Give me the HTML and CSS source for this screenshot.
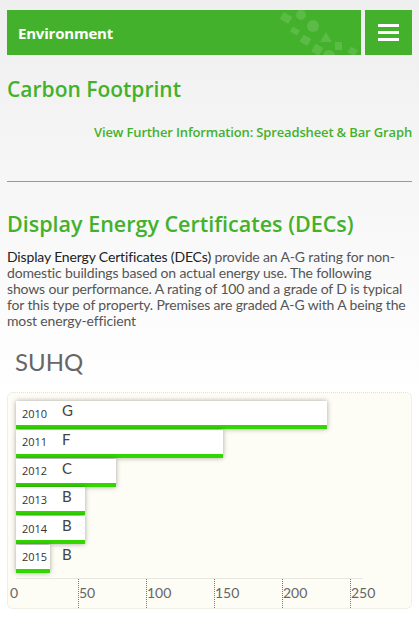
FILE: index.html
```html
<!DOCTYPE html>
<html lang="en">
<head>
    <meta charset="UTF-8">
    <meta name="viewport" content="width=device-width, initial-scale=1.0">
    <title>Environment - Carbon Footprint</title>
    <link rel="stylesheet" href="styles.css">
</head>
<body>
    <!-- Top bar with section title and menu button -->
    <div class="topbar">
        <div class="section-title">
            <span>Environment</span>
            <svg class="pattern" width="90" height="45" viewBox="0 0 90 45">
                <g fill="#ffffff" fill-opacity="0.13">
                    <rect x="10" y="4" width="10" height="8" rx="1" transform="rotate(30 15 8)"/>
                    <circle cx="30" cy="5" r="5"/>
                    <circle cx="42" cy="16" r="6"/>
                    <rect x="20" y="18" width="8" height="6" transform="rotate(30 24 21)"/>
                    <rect x="30" y="26" width="9" height="8" rx="1" transform="rotate(30 34 30)"/>
                    <polygon points="55,22 61,32 49,32"/>
                    <rect x="42" y="35" width="9" height="9" rx="1" transform="rotate(30 46 39)"/>
                    <rect x="64" y="32" width="7" height="8"/>
                    <circle cx="58" cy="46" r="6"/>
                    <rect x="78" y="38" width="8" height="7" transform="rotate(30 82 41)"/>
                </g>
            </svg>
        </div>
        <div class="menu-btn">
            <span></span><span></span><span></span>
        </div>
    </div>

    <div class="content">
        <h1>Carbon Footprint</h1>
        <p class="further"><a href="#">View Further Information: Spreadsheet &amp; Bar Graph</a></p>

        <hr>

        <h2>Display Energy Certificates (DECs)</h2>
        <p class="intro"><span class="dark">Display Energy Certificates (DECs)</span> provide an A-G rating for non-domestic buildings based on actual energy use. The following shows our performance. A rating of 100 and a grade of D is typical for this type of property. Premises are graded A-G with A being the most energy-efficient</p>

        <h3>SUHQ</h3>

        <!-- DEC rating chart -->
        <div class="chart">
            <div class="bars">
                <div class="bar-row"><div class="bar" style="width: 311px"><span class="year">2010</span><span class="grade">G</span></div></div>
                <div class="bar-row"><div class="bar" style="width: 207px"><span class="year">2011</span><span class="grade">F</span></div></div>
                <div class="bar-row"><div class="bar" style="width: 100px"><span class="year">2012</span><span class="grade">C</span></div></div>
                <div class="bar-row"><div class="bar" style="width: 69px"><span class="year">2013</span><span class="grade">B</span></div></div>
                <div class="bar-row"><div class="bar" style="width: 69px"><span class="year">2014</span><span class="grade">B</span></div></div>
                <div class="bar-row"><div class="bar" style="width: 34px"><span class="year">2015</span><span class="grade">B</span></div></div>
            </div>
            <div class="axis">
                <div class="tick first">0</div>
                <div class="tick">50</div>
                <div class="tick">100</div>
                <div class="tick">150</div>
                <div class="tick">200</div>
                <div class="tick">250</div>
            </div>
        </div>
    </div>
</body>
</html>
```

FILE: styles.css
```css
/* Basic page styling */
body {
    font-family: Lato, "Open Sans", sans-serif;
    background: linear-gradient(to bottom, #efefef 0px, #ffffff 400px);
    background-color: #ffffff;
    margin: 0;
    padding: 10px 7px 0 7px;
    min-height: 629px;
    box-sizing: border-box;
}

/* Top bar */
.topbar {
    display: flex;
    gap: 4px;
    height: 45px;
}

.section-title {
    flex: 1;
    position: relative;
    overflow: hidden;
    background-color: #43b12b;
    color: white;
    font-family: "Open Sans", sans-serif;
    font-weight: 700;
    font-size: 15px;
    letter-spacing: -0.2px;
    display: flex;
    align-items: center;
    padding-left: 11px;
}

.section-title .pattern {
    position: absolute;
    right: 0;
    top: 0;
}

.menu-btn {
    width: 47px;
    background-color: #43b12b;
    display: flex;
    flex-direction: column;
    justify-content: center;
    align-items: center;
    gap: 4px;
}

.menu-btn span {
    display: block;
    width: 21px;
    height: 3px;
    background-color: white;
}

/* Headings */
h1, h2 {
    font-family: "Open Sans", sans-serif;
    font-weight: 600;
    color: #43b12b;
    margin: 0;
}

h1 {
    font-size: 21px;
    margin-top: 20px;
}

.further {
    text-align: right;
    margin: 20px 0 0 0;
    font-family: "Open Sans", sans-serif;
    font-size: 13px;
    font-weight: 600;
    letter-spacing: -0.15px;
}

.further a {
    color: #43b12b;
    text-decoration: none;
}

hr {
    border: none;
    border-top: 1px solid #999;
    margin: 40px 0 0 0;
}

h2 {
    font-size: 21.5px;
    line-height: 26px;
    margin-top: 29px;
}

.intro {
    font-size: 14px;
    line-height: 16px;
    letter-spacing: -0.15px;
    color: #555;
    margin: 12px 0 0 0;
}

.intro .dark {
    color: #222;
}

h3 {
    font-family: Lato, sans-serif;
    font-weight: 400;
    font-size: 24px;
    color: #666;
    margin: 18px 0 0 8px;
}

/* Chart */
.chart {
    margin-top: 16px;
    background-color: #fdfdf5;
    border: 1px dotted #e2e2d8;
    border-radius: 6px;
    padding: 8px 0 0 0;
    height: 207px;
    overflow: hidden;
}

.bars {
    margin: 0 48px 0 8px;
    padding-bottom: 4px;
    border-bottom: 1px solid #e8e8e0;
}

.bar-row {
    height: 28.8px;
}

.bar {
    height: 28px;
    box-sizing: border-box;
    background-color: white;
    border-bottom: 4px solid #33d600;
    box-shadow: 0 0 5px rgba(0, 0, 0, 0.35);
    display: flex;
    align-items: center;
    white-space: nowrap;
}

.year {
    flex-shrink: 0;
    font-size: 11px;
    color: #333;
    margin-left: 6px;
    width: 40px;
    font-family: "Open Sans", sans-serif;
}

.grade {
    flex-shrink: 0;
    font-size: 15px;
    color: #444;
    margin-top: -6px;
}

.axis {
    display: flex;
    height: 31px;
    padding-left: 2px;
}

.tick {
    flex-shrink: 0;
    width: 68px;
    box-sizing: border-box;
    border-left: 1px dotted #2fb12b;
    font-size: 14px;
    color: #666;
    padding-top: 5px;
}

.tick.first {
    border-left: none;
}
```
